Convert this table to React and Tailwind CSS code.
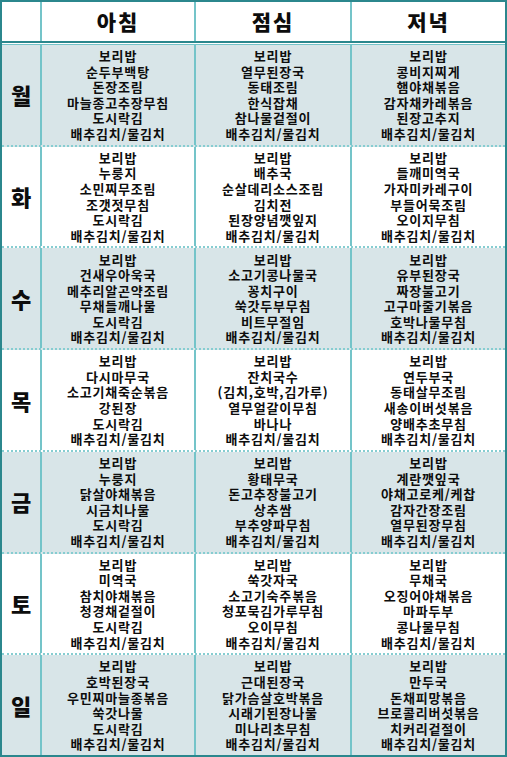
const KIMCHI = '배추김치/물김치'

const DAYS = [
  {
    day: '월',
    meals: [
      ['보리밥', '순두부백탕', '돈장조림', '마늘종고추장무침', '도시락김', KIMCHI],
      ['보리밥', '열무된장국', '동태조림', '한식잡채', '참나물겉절이', KIMCHI],
      ['보리밥', '콩비지찌게', '햄야채볶음', '감자채카레볶음', '된장고추지', KIMCHI],
    ],
  },
  {
    day: '화',
    meals: [
      ['보리밥', '누룽지', '소민찌무조림', '조갯젓무침', '도시락김', KIMCHI],
      ['보리밥', '배추국', '순살데리소스조림', '김치전', '된장양념깻잎지', KIMCHI],
      ['보리밥', '들깨미역국', '가자미카레구이', '부들어묵조림', '오이지무침', KIMCHI],
    ],
  },
  {
    day: '수',
    meals: [
      ['보리밥', '건새우아욱국', '메추리알곤약조림', '무채들깨나물', '도시락김', KIMCHI],
      ['보리밥', '소고기콩나물국', '꽁치구이', '쑥갓두부무침', '비트무절임', KIMCHI],
      ['보리밥', '유부된장국', '짜장불고기', '고구마줄기볶음', '호박나물무침', KIMCHI],
    ],
  },
  {
    day: '목',
    meals: [
      ['보리밥', '다시마무국', '소고기채죽순볶음', '강된장', '도시락김', KIMCHI],
      ['보리밥', '잔치국수', '(김치,호박,김가루)', '열무얼갈이무침', '바나나', KIMCHI],
      ['보리밥', '연두부국', '동태살무조림', '새송이버섯볶음', '양배추초무침', KIMCHI],
    ],
  },
  {
    day: '금',
    meals: [
      ['보리밥', '누룽지', '닭살야채볶음', '시금치나물', '도시락김', KIMCHI],
      ['보리밥', '황태무국', '돈고추장불고기', '상추쌈', '부추양파무침', KIMCHI],
      ['보리밥', '계란깻잎국', '야채고로케/케찹', '감자간장조림', '열무된장무침', KIMCHI],
    ],
  },
  {
    day: '토',
    meals: [
      ['보리밥', '미역국', '참치야채볶음', '청경채겉절이', '도시락김', KIMCHI],
      ['보리밥', '쑥갓자국', '소고기숙주볶음', '청포묵김가루무침', '오이무침', KIMCHI],
      ['보리밥', '무채국', '오징어야채볶음', '마파두부', '콩나물무침', KIMCHI],
    ],
  },
  {
    day: '일',
    meals: [
      ['보리밥', '호박된장국', '우민찌마늘종볶음', '쑥갓나물', '도시락김', KIMCHI],
      ['보리밥', '근대된장국', '닭가슴살호박볶음', '시래기된장나물', '미나리초무침', KIMCHI],
      ['보리밥', '만두국', '돈채피망볶음', '브로콜리버섯볶음', '치커리겉절이', KIMCHI],
    ],
  },
]

const FONT = "font-['Noto_Sans_CJK_KR','Noto_Sans',sans-serif]"

export default function App() {
  return (
    <div className={`w-[507px] h-[757px] flex flex-col border-2 border-[#2b878d] bg-white text-[#0d0d0d] ${FONT}`}>
      {/* header */}
      <div className="grid grid-cols-[38px_154px_156px_1fr] h-[39px] shrink-0">
        <div />
        {['아침', '점심', '저녁'].map(h => (
          <div key={h} className="border-l-2 border-[#74c4c9] flex items-center justify-center text-[21px] font-black tracking-[2px]">
            {h}
          </div>
        ))}
      </div>
      <div className="h-[2px] bg-[#2b878d] shrink-0" />
      <div className="h-[1px] bg-white shrink-0" />
      <div className="h-[1px] bg-[#74c4c9] shrink-0" />

      {/* rows */}
      <div className="flex-1 flex flex-col">
        {DAYS.map((d, i) => (
          <div
            key={d.day}
            className={`flex-1 grid grid-cols-[38px_154px_156px_1fr] ${i % 2 === 0 ? 'bg-[#d8e5e8]' : 'bg-white'} ${i < DAYS.length - 1 ? 'border-b-2 border-dotted border-[#86cdd1]' : ''}`}
          >
            <div className="flex items-center justify-center text-[22px] font-black">{d.day}</div>
            {d.meals.map((m, j) => (
              <div key={j} className="border-l-2 border-[#74c4c9] flex flex-col items-center justify-center text-[13px] font-bold tracking-[0.8px] leading-[15.6px]">
                {m.map((item, k) => (
                  <span key={k} className="whitespace-nowrap">{item}</span>
                ))}
              </div>
            ))}
          </div>
        ))}
      </div>
    </div>
  )
}
